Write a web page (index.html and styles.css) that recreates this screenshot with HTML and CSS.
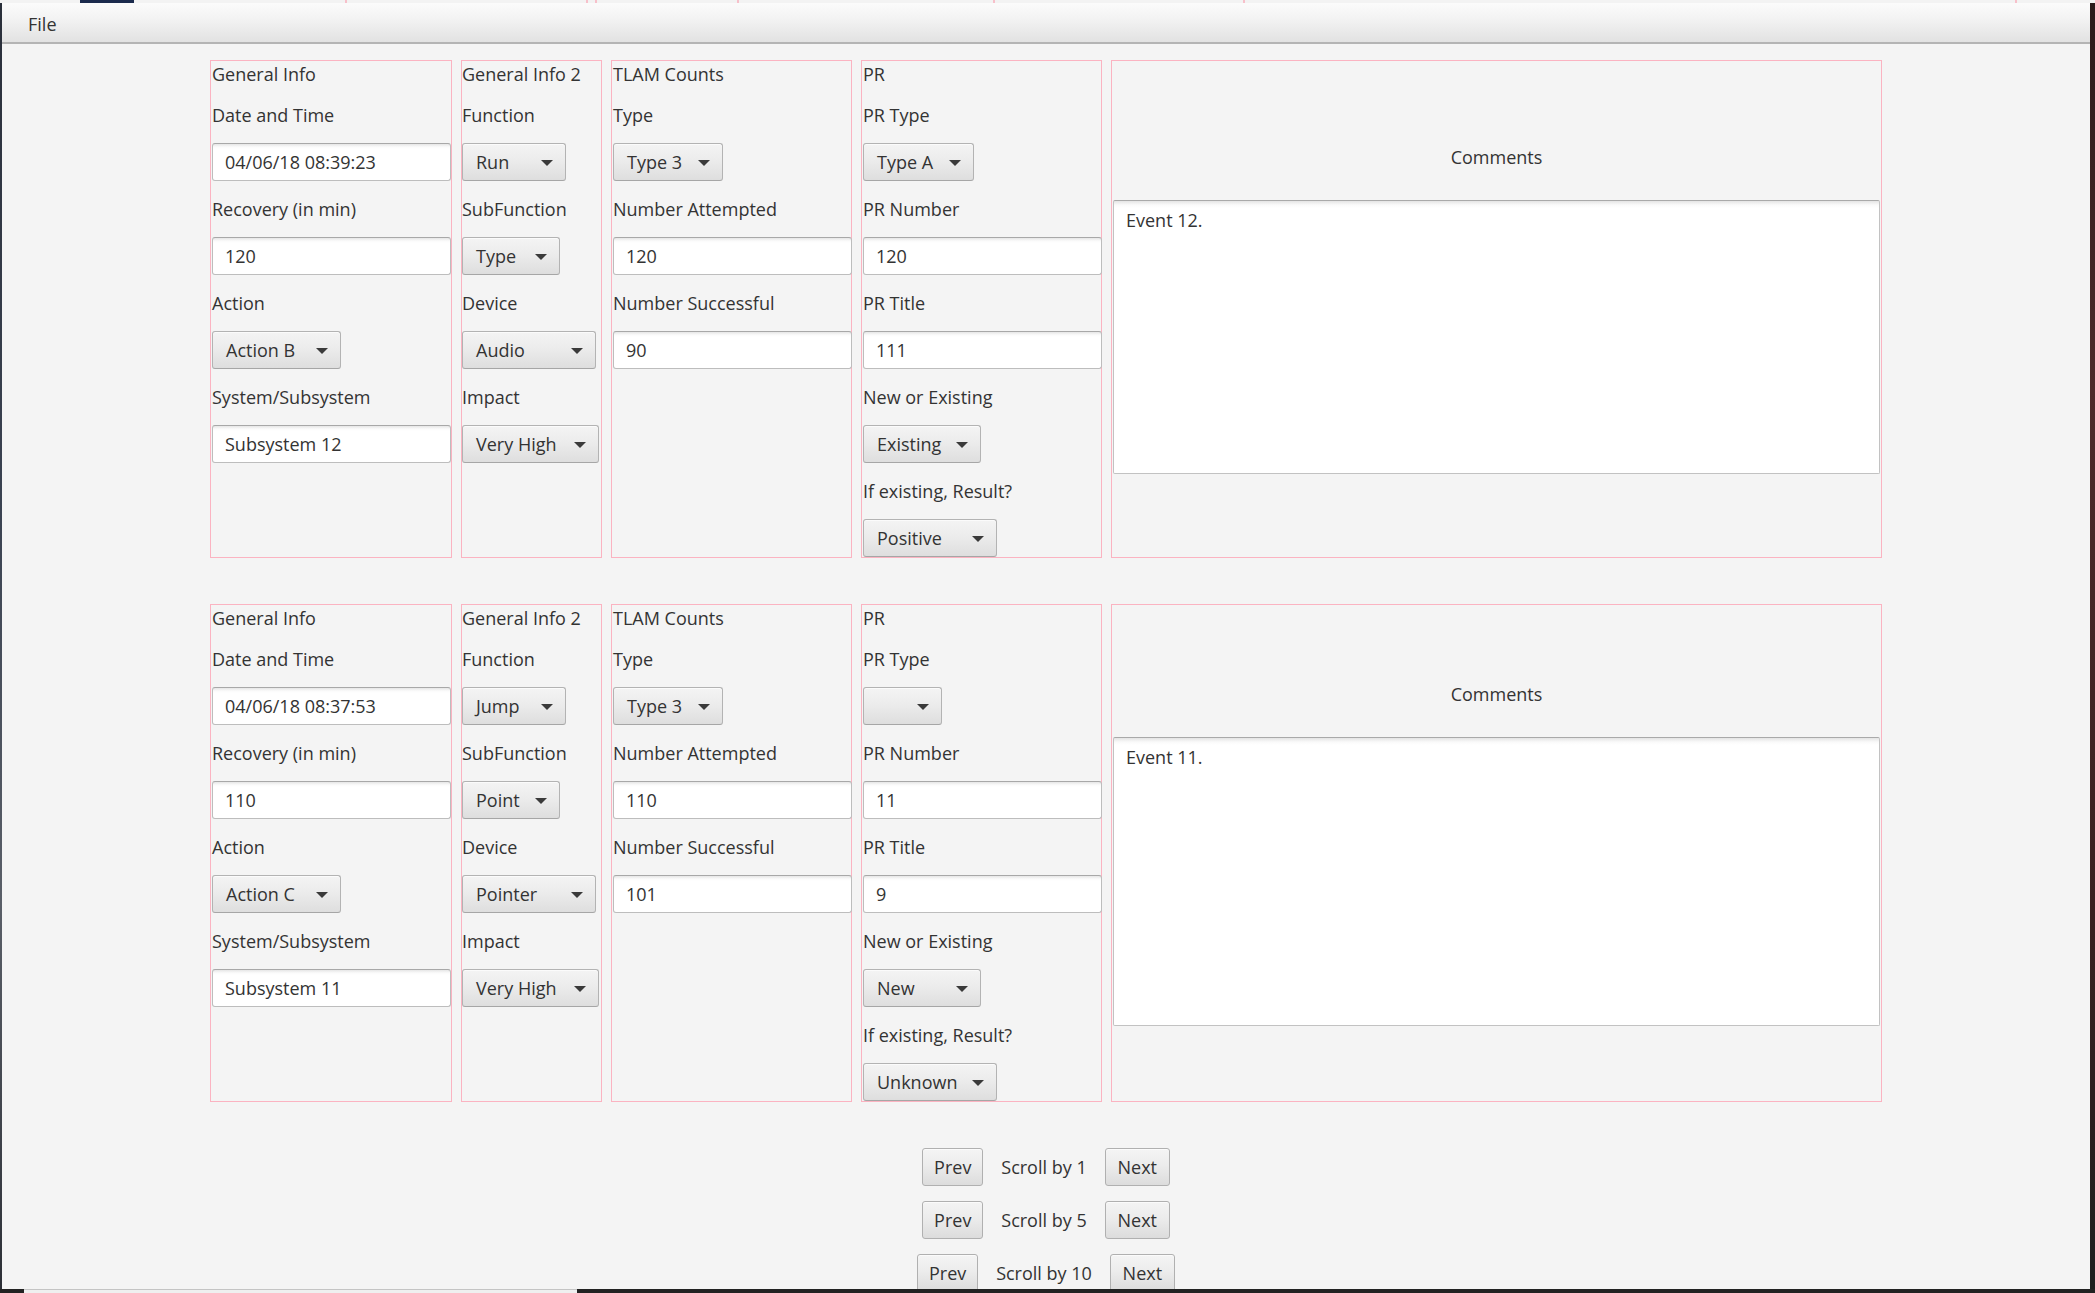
FILE: index.html
```html
<!DOCTYPE html>
<html lang="en">
<head>
<meta charset="utf-8">
<title>Event Log</title>
<link rel="stylesheet" href="styles.css">
</head>
<body>
<div class="screen">
  <div class="topstrip">
    <span class="blob"></span>
    <span class="tick t1"></span><span class="tick t2"></span><span class="tick t3"></span>
    <span class="tick t4"></span><span class="tick t5"></span><span class="tick t6"></span><span class="tick t7"></span>
  </div>
  <div class="middle">
    <div class="edge-left"></div>
    <div class="window">
      <div class="menubar"><span class="menu">File</span></div>
      <div class="content">

        <div class="record">
          <div class="box box-general">
            <div class="lbl">General Info</div>
            <div class="lbl">Date and Time</div>
            <div class="field">04/06/18 08:39:23</div>
            <div class="lbl">Recovery (in min)</div>
            <div class="field">120</div>
            <div class="lbl">Action</div>
            <div class="combo w-action"><span>Action B</span><i class="arrow"></i></div>
            <div class="lbl">System/Subsystem</div>
            <div class="field">Subsystem 12</div>
          </div>
          <div class="box box-general2">
            <div class="lbl">General Info 2</div>
            <div class="lbl">Function</div>
            <div class="combo w-func"><span>Run</span><i class="arrow"></i></div>
            <div class="lbl">SubFunction</div>
            <div class="combo w-sub"><span>Type</span><i class="arrow"></i></div>
            <div class="lbl">Device</div>
            <div class="combo w-device"><span>Audio</span><i class="arrow"></i></div>
            <div class="lbl">Impact</div>
            <div class="combo w-impact"><span>Very High</span><i class="arrow"></i></div>
          </div>
          <div class="box box-tlam">
            <div class="lbl">TLAM Counts</div>
            <div class="lbl">Type</div>
            <div class="combo w-type"><span>Type 3</span><i class="arrow"></i></div>
            <div class="lbl">Number Attempted</div>
            <div class="field">120</div>
            <div class="lbl">Number Successful</div>
            <div class="field">90</div>
          </div>
          <div class="box box-pr">
            <div class="lbl">PR</div>
            <div class="lbl">PR Type</div>
            <div class="combo w-prtype"><span>Type A</span><i class="arrow"></i></div>
            <div class="lbl">PR Number</div>
            <div class="field">120</div>
            <div class="lbl">PR Title</div>
            <div class="field">111</div>
            <div class="lbl">New or Existing</div>
            <div class="combo w-new"><span>Existing</span><i class="arrow"></i></div>
            <div class="lbl">If existing, Result?</div>
            <div class="combo w-result"><span>Positive</span><i class="arrow"></i></div>
          </div>
          <div class="box box-comments">
            <div class="lbl lbl-center">Comments</div>
            <div class="textarea">Event 12.</div>
          </div>
        </div>

        <div class="record">
          <div class="box box-general">
            <div class="lbl">General Info</div>
            <div class="lbl">Date and Time</div>
            <div class="field">04/06/18 08:37:53</div>
            <div class="lbl">Recovery (in min)</div>
            <div class="field">110</div>
            <div class="lbl">Action</div>
            <div class="combo w-action"><span>Action C</span><i class="arrow"></i></div>
            <div class="lbl">System/Subsystem</div>
            <div class="field">Subsystem 11</div>
          </div>
          <div class="box box-general2">
            <div class="lbl">General Info 2</div>
            <div class="lbl">Function</div>
            <div class="combo w-func"><span>Jump</span><i class="arrow"></i></div>
            <div class="lbl">SubFunction</div>
            <div class="combo w-sub"><span>Point</span><i class="arrow"></i></div>
            <div class="lbl">Device</div>
            <div class="combo w-device"><span>Pointer</span><i class="arrow"></i></div>
            <div class="lbl">Impact</div>
            <div class="combo w-impact"><span>Very High</span><i class="arrow"></i></div>
          </div>
          <div class="box box-tlam">
            <div class="lbl">TLAM Counts</div>
            <div class="lbl">Type</div>
            <div class="combo w-type"><span>Type 3</span><i class="arrow"></i></div>
            <div class="lbl">Number Attempted</div>
            <div class="field">110</div>
            <div class="lbl">Number Successful</div>
            <div class="field">101</div>
          </div>
          <div class="box box-pr">
            <div class="lbl">PR</div>
            <div class="lbl">PR Type</div>
            <div class="combo w-empty"><span></span><i class="arrow"></i></div>
            <div class="lbl">PR Number</div>
            <div class="field">11</div>
            <div class="lbl">PR Title</div>
            <div class="field">9</div>
            <div class="lbl">New or Existing</div>
            <div class="combo w-new"><span>New</span><i class="arrow"></i></div>
            <div class="lbl">If existing, Result?</div>
            <div class="combo w-result"><span>Unknown</span><i class="arrow"></i></div>
          </div>
          <div class="box box-comments">
            <div class="lbl lbl-center">Comments</div>
            <div class="textarea textarea-tall">Event 11.</div>
          </div>
        </div>

        <div class="nav">
          <div class="nav-row"><div class="btn btn-prev">Prev</div><span class="nav-label">Scroll by 1</span><div class="btn btn-next">Next</div></div>
          <div class="nav-row"><div class="btn btn-prev">Prev</div><span class="nav-label">Scroll by 5</span><div class="btn btn-next">Next</div></div>
          <div class="nav-row"><div class="btn btn-prev">Prev</div><span class="nav-label">Scroll by 10</span><div class="btn btn-next">Next</div></div>
        </div>

      </div>
    </div>
    <div class="edge-right"></div>
  </div>
  <div class="bottomstrip"><div class="taskitem"></div></div>
</div>
</body>
</html>
```

FILE: styles.css
```css
* { box-sizing: border-box; }

html, body {
  margin: 0;
  padding: 0;
  width: 2095px;
  height: 1293px;
  overflow: hidden;
  background: #1f1f1f;
  font-family: "Open Sans", "Noto Sans", "DejaVu Sans", sans-serif;
  color: #333333;
}

.screen {
  display: flex;
  flex-direction: column;
  width: 2095px;
  height: 1293px;
}

/* strip of the window behind, visible above ours */
.topstrip {
  position: relative;
  height: 3px;
  flex: none;
  background: #f3f3f3;
}
.blob {
  position: absolute;
  left: 80px;
  top: 0;
  width: 54px;
  height: 3px;
  background: #1c2b4d;
}
.tick {
  position: absolute;
  top: 0;
  width: 2px;
  height: 3px;
  background: #f7c0ca;
}
.t1 { left: 345px; }
.t2 { left: 586px; }
.t3 { left: 595px; }
.t4 { left: 737px; }
.t5 { left: 993px; }
.t6 { left: 1243px; }
.t7 { left: 2015px; }

.middle {
  display: flex;
  height: 1286px;
  flex: none;
}
.edge-left {
  width: 2px;
  flex: none;
  background: linear-gradient(to bottom, #2a2f3a, #3b4352 40%, #5a5f68 70%, #2c2f36);
}
.edge-right {
  width: 5px;
  flex: none;
  background: linear-gradient(to bottom, #2b1a1a, #4e2a2a 30%, #3a2020 70%, #1e1e1e);
}

.window {
  flex: 1;
  display: flex;
  flex-direction: column;
  background: #f4f4f4;
  overflow: hidden;
}

.menubar {
  height: 41px;
  flex: none;
  background: linear-gradient(to bottom, #fbfbfb, #f3f3f3 40%, #e2e2e2);
  border-bottom: 2px solid #b4b4b4;
  padding: 8px 0 0 26px;
}
.menu {
  font-size: 18px;
  line-height: 26px;
  color: #333;
}

.content {
  display: flex;
  flex-direction: column;
  align-items: center;
  gap: 46px;
  padding-top: 16px;
}

.record {
  display: flex;
  gap: 9px;
}

.box {
  border: 1px solid #fbb3c1;
  display: flex;
  flex-direction: column;
  align-items: flex-start;
  gap: 15px;
  padding: 0 0 0 1px;
}
.box-general { width: 242px; }
.box-general2 { width: 141px; padding-left: 0; }
.box-tlam { width: 241px; }
.box-pr { width: 241px; }
.box-comments {
  width: 771px;
  padding: 0 1px;
  justify-content: center;
  align-items: stretch;
  gap: 30px;
}

.lbl {
  height: 26px;
  line-height: 26px;
  font-size: 18px;
  white-space: nowrap;
  color: #333;
}
.lbl-center { text-align: center; }

.field {
  width: 239px;
  height: 38px;
  line-height: 36px;
  font-size: 18px;
  padding-left: 12px;
  border: 1px solid #bdbdbd;
  border-top-color: #a8a8a8;
  border-radius: 3px;
  background: linear-gradient(to bottom, #e6e6e6 0, #fbfbfb 3px, #ffffff 5px);
  color: #333;
  white-space: nowrap;
}

.combo {
  height: 38px;
  display: flex;
  align-items: center;
  justify-content: space-between;
  padding: 0 12px 0 13px;
  border: 1px solid #b3b3b3;
  border-bottom-color: #a6a6a6;
  border-radius: 3px;
  background: linear-gradient(to bottom, #f4f4f4, #ececec 45%, #dedede);
  box-shadow: inset 0 1px 0 #fbfbfb;
  font-size: 18px;
  color: #333;
  white-space: nowrap;
}
.arrow {
  width: 0;
  height: 0;
  border-left: 6px solid transparent;
  border-right: 6px solid transparent;
  border-top: 6px solid #3a3a3a;
  margin-top: 1px;
}
.w-action { width: 129px; }
.w-func { width: 104px; }
.w-sub { width: 98px; }
.w-device { width: 134px; }
.w-impact { width: 137px; }
.w-type { width: 110px; }
.w-prtype { width: 111px; }
.w-empty { width: 79px; justify-content: flex-end; }
.w-new { width: 118px; }
.w-result { width: 134px; }

.textarea {
  height: 274px;
  border: 1px solid #c2c2c2;
  border-top-color: #a9a9a9;
  border-radius: 2px;
  background: linear-gradient(to bottom, #e4e4e4 0, #fafafa 4px, #ffffff 7px);
  padding: 6px 12px;
  font-size: 18px;
  line-height: 26px;
  color: #333;
}
.textarea-tall { height: 289px; }

.nav {
  display: flex;
  flex-direction: column;
  align-items: center;
  gap: 15px;
}
.nav-row {
  display: flex;
  align-items: center;
  gap: 18px;
}
.nav-label {
  font-size: 18px;
  color: #333;
  white-space: nowrap;
}
.btn {
  height: 38px;
  line-height: 36px;
  text-align: center;
  border: 1px solid #b0b0b0;
  border-radius: 3px;
  background: linear-gradient(to bottom, #f4f4f4, #ececec 45%, #dcdcdc);
  box-shadow: inset 0 1px 0 #fbfbfb;
  font-size: 18px;
  color: #333;
}
.btn-prev { width: 61px; }
.btn-next { width: 65px; }

.bottomstrip {
  height: 4px;
  flex: none;
  background: #222222;
  padding-left: 24px;
}
.taskitem {
  width: 553px;
  height: 4px;
  border-top: 1px solid #c4c4c4;
  background: #efefef;
}
```
